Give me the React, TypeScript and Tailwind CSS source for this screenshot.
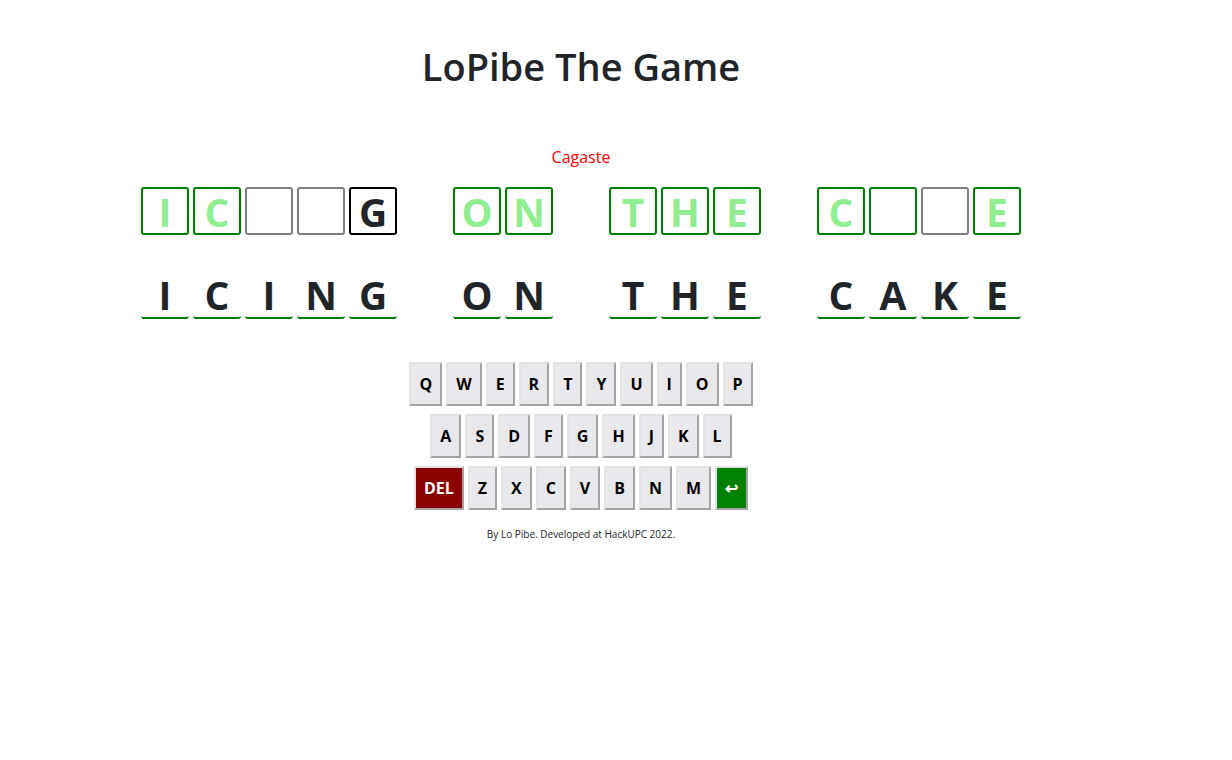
import React from 'react';

type Cell = { letter: string; state: 'hit' | 'empty-hit' | 'empty' | 'active' };

const guess: Cell[][] = [
  [
    { letter: 'I', state: 'hit' },
    { letter: 'C', state: 'hit' },
    { letter: '', state: 'empty' },
    { letter: '', state: 'empty' },
    { letter: 'G', state: 'active' },
  ],
  [
    { letter: 'O', state: 'hit' },
    { letter: 'N', state: 'hit' },
  ],
  [
    { letter: 'T', state: 'hit' },
    { letter: 'H', state: 'hit' },
    { letter: 'E', state: 'hit' },
  ],
  [
    { letter: 'C', state: 'hit' },
    { letter: '', state: 'empty-hit' },
    { letter: '', state: 'empty' },
    { letter: 'E', state: 'hit' },
  ],
];

const answer = ['ICING', 'ON', 'THE', 'CAKE'];

const rows = ['QWERTYUIOP', 'ASDFGHJKL', 'ZXCVBNM'];

const cellClass = (state: Cell['state']) => {
  switch (state) {
    case 'hit':
      return 'border-[#008000] text-[#90ee90]';
    case 'empty-hit':
      return 'border-[#008000]';
    case 'active':
      return 'border-black text-[#212529]';
    default:
      return 'border-[#808080]';
  }
};

const keyBase =
  'h-[44px] px-2 border-2 border-t-[#e3e3e3] border-l-[#e3e3e3] border-r-[#a3a3a3] border-b-[#a3a3a3] text-base font-bold leading-6';

const App: React.FC = () => {
  return (
    <div className="w-[1162px] flex flex-col items-center text-[#212529] font-['Open_Sans',sans-serif]">
      <h1 className="mt-[42px] text-[38px] leading-[48px] font-semibold">LoPibe The Game</h1>

      <p className="mt-[55px] text-base leading-6 text-[#ff0000]">Cagaste</p>

      <div className="mt-[18px] flex gap-[56px]">
        {guess.map((word, wi) => (
          <div key={wi} className="flex gap-1">
            {word.map((c, ci) => (
              <div
                key={ci}
                className={`w-12 h-12 border-2 rounded-[3px] flex items-center justify-center text-[39px] font-bold leading-none ${cellClass(c.state)}`}
              >
                {c.letter}
              </div>
            ))}
          </div>
        ))}
      </div>

      <div className="mt-9 flex gap-[56px]">
        {answer.map((word, wi) => (
          <div key={wi} className="flex gap-1">
            {word.split('').map((l, li) => (
              <div
                key={li}
                className="w-12 h-12 border-b-2 border-[#008000] rounded-b-[3px] flex items-center justify-center text-[39px] font-bold leading-none"
              >
                {l}
              </div>
            ))}
          </div>
        ))}
      </div>

      <div className="mt-[43px] flex flex-col items-center gap-2">
        {rows.map((row, ri) => (
          <div key={ri} className="flex gap-1">
            {ri === 2 && (
              <button className={`${keyBase} bg-[#8b0000] text-white`}>DEL</button>
            )}
            {row.split('').map((k) => (
              <button key={k} className={`${keyBase} bg-[#e9e9ed] text-black`}>
                {k}
              </button>
            ))}
            {ri === 2 && (
              <button className={`${keyBase} bg-[#008000] text-white`}>↩</button>
            )}
          </div>
        ))}
      </div>

      <p className="mt-[16px] text-[10px] leading-4">By Lo Pibe. Developed at HackUPC 2022.</p>
    </div>
  );
};

export default App;
